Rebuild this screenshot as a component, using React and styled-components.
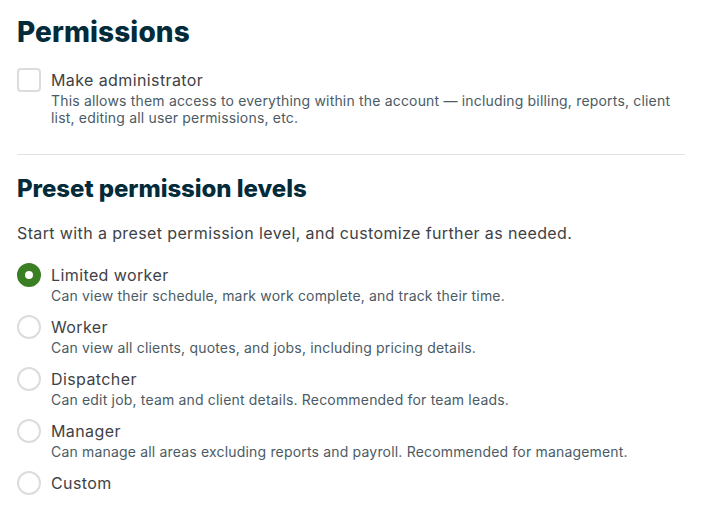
import React, { useState } from "react";
import styled, { createGlobalStyle } from "styled-components";

const Global = createGlobalStyle`
  html, body { margin: 0; padding: 0; background: #ffffff; }
  body { font-family: Inter, "Noto Sans", "Liberation Sans", sans-serif; -webkit-font-smoothing: antialiased; }
  * { box-sizing: border-box; }
`;

const Page = styled.div`
  padding: 15px 18px 20px 17px;
  display: flex;
  flex-direction: column;
`;

const Title = styled.h1`
  margin: 0;
  font-size: 28px;
  line-height: 34px;
  font-weight: 800;
  color: #032b3a;
  letter-spacing: 0.1px;
`;

const SubTitle = styled.h2`
  margin: 0;
  font-size: 24px;
  line-height: 30px;
  font-weight: 800;
  color: #032b3a;
  letter-spacing: -0.05px;
`;

const Option = styled.label`
  display: flex;
  align-items: flex-start;
  gap: 10px;
  cursor: pointer;
`;

const CheckBox = styled.span`
  flex: 0 0 24px;
  width: 24px;
  height: 24px;
  border: 2px solid #dcdcdc;
  border-radius: 4px;
  background: #fff;
`;

const RadioDot = styled.span`
  flex: 0 0 24px;
  width: 24px;
  height: 24px;
  border-radius: 50%;
  border: ${(p) => (p.$checked ? "8px solid #3a7f23" : "2px solid #dcdcdc")};
  background: #fff;
`;

const OptionText = styled.div`
  display: flex;
  flex-direction: column;
`;

const Label = styled.span`
  font-size: 16px;
  line-height: 24px;
  color: #3e4246;
  letter-spacing: 0.4px;
`;

const Desc = styled.span`
  font-size: 14px;
  line-height: 17px;
  color: #4b5b65;
  letter-spacing: 0.18px;
`;

const AdminRow = styled.div`
  margin-top: 19px;
`;

const Divider = styled.hr`
  margin: 28px 0 19px;
  border: none;
  border-top: 1px solid #e2e2e2;
  height: 0;
`;

const Intro = styled.p`
  margin: 17px 0 0;
  font-size: 16px;
  line-height: 24px;
  color: #3e4246;
  letter-spacing: 0.38px;
`;

const RadioList = styled.div`
  margin-top: 18px;
  display: flex;
  flex-direction: column;
  gap: 11px;
`;

const levels = [
  { name: "Limited worker", desc: "Can view their schedule, mark work complete, and track their time." },
  { name: "Worker", desc: "Can view all clients, quotes, and jobs, including pricing details." },
  { name: "Dispatcher", desc: "Can edit job, team and client details. Recommended for team leads." },
  { name: "Manager", desc: "Can manage all areas excluding reports and payroll. Recommended for management." },
  { name: "Custom", desc: "" },
];

export default function App() {
  const [selected, setSelected] = useState("Limited worker");
  return (
    <>
      <Global />
      <Page>
        <Title>Permissions</Title>
        <AdminRow>
          <Option>
            <CheckBox />
            <OptionText>
              <Label>Make administrator</Label>
              <Desc>
                This allows them access to everything within the account — including billing, reports, client
                <br />
                list, editing all user permissions, etc.
              </Desc>
            </OptionText>
          </Option>
        </AdminRow>
        <Divider />
        <SubTitle>Preset permission levels</SubTitle>
        <Intro>Start with a preset permission level, and customize further as needed.</Intro>
        <RadioList>
          {levels.map((l) => (
            <Option key={l.name} onClick={() => setSelected(l.name)}>
              <RadioDot $checked={selected === l.name} />
              <OptionText>
                <Label>{l.name}</Label>
                {l.desc && <Desc>{l.desc}</Desc>}
              </OptionText>
            </Option>
          ))}
        </RadioList>
      </Page>
    </>
  );
}
